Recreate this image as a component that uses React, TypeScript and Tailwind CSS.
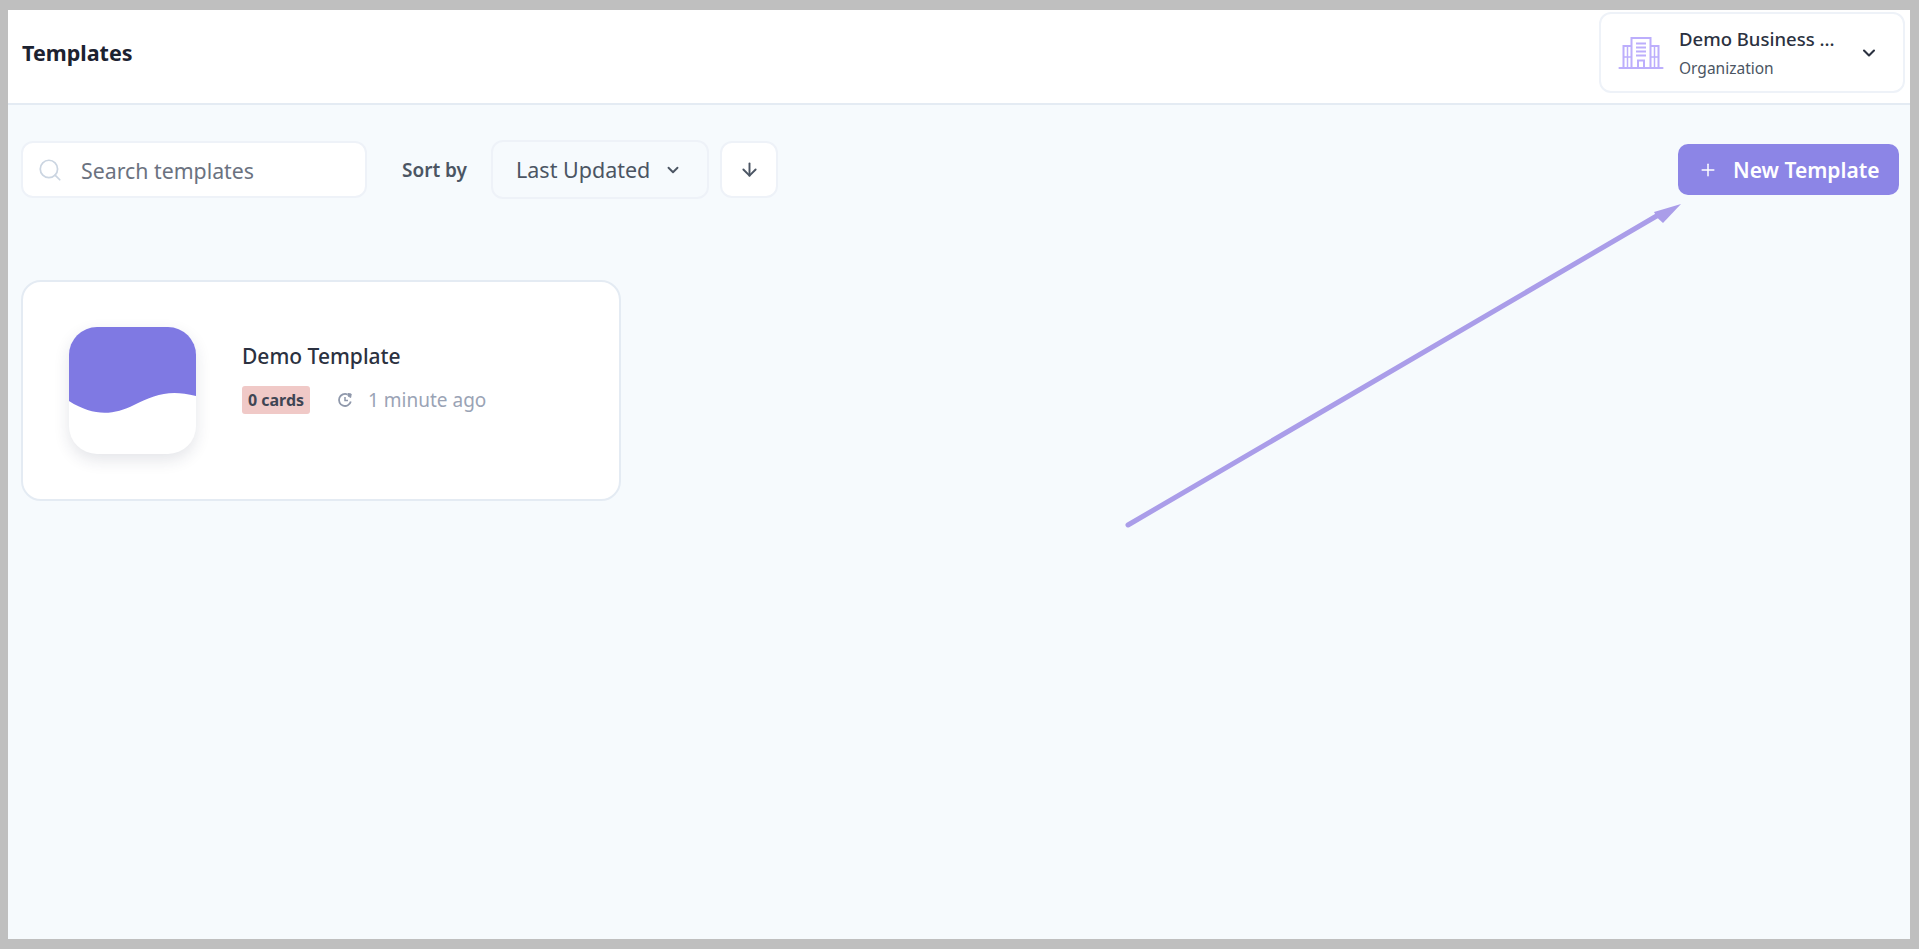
import React from "react";
import { ChevronDown, ArrowDown, Plus, Search } from "lucide-react";

function BuildingIcon() {
  return (
    <svg width="46" height="34" viewBox="0 0 46 34" fill="none" stroke="#bcaefc" strokeWidth="2" className="shrink-0">
      <path d="M1.500 32h43" strokeWidth="2.200" strokeLinecap="round" />
      <path d="M13.500 32V2h19v30" />
      <path d="M13.500 10H5.500v22M32.500 10h8v22" />
      <path d="M18 7.500h10M18 11.500h10M18 15.500h10M18 19.500h10" strokeWidth="1.800" />
      <path d="M20 32v-7.500h6V32" />
      <path d="M9.500 10v22M36.500 10v22M5.500 21h8M32.500 21h8" strokeWidth="1.500" />
    </svg>
  );
}

function HistoryIcon() {
  return (
    <svg width="16" height="16" viewBox="0 0 16 16" fill="none" stroke="#8f98ab" strokeWidth="1.800" className="ml-[27px] shrink-0">
      <path d="M13.800 9.500A6 6 0 1 1 10.500 2.500" />
      <path d="M11 1.500l3.200 0.500-0.500 3.500-2.700-1.500z" fill="#8f98ab" strokeWidth="1" />
      <path d="M8 5v3.500h3" strokeWidth="1.500" />
    </svg>
  );
}

function Header() {
  return (
    <header className="h-[95px] shrink-0 bg-white border-b-2 border-[#e4ebf3] flex items-start justify-between pl-[14px] pr-[5px]">
      <h1 className="mt-[27px] text-[21.500px] leading-[32px] font-bold text-[#1c2230]">Templates</h1>
      <button className="mt-[2px] w-[306px] h-[81px] rounded-[12px] border-2 border-[#eef2f8] bg-white flex items-center pl-[17px] pr-[24px]">
        <BuildingIcon />
        <span className="ml-[15px] flex flex-col items-start flex-1">
          <span className="text-[18.500px] leading-[26px] font-medium text-[#2b3140] whitespace-nowrap">Demo Business ...</span>
          <span className="mt-[4px] text-[15.500px] leading-[24px] text-[#4b5563]">Organization</span>
        </span>
        <ChevronDown size={20} strokeWidth={2.500} className="text-[#2b3140]" />
      </button>
    </header>
  );
}

function Toolbar() {
  return (
    <div className="flex items-center justify-between pl-[13px] pr-[11px] mt-[35px]">
      <div className="flex items-center">
        <label className="w-[346px] h-[57px] rounded-[12px] border-2 border-[#eef2f8] bg-white flex items-center pl-[14px]">
          <Search size={26} strokeWidth={1.600} className="text-[#cbd5e1]" />
          <span className="ml-[18px] pt-[2px] text-[21.300px] text-[#6b7280]">Search templates</span>
        </label>
        <span className="ml-[35px] pt-[2px] text-[19px] font-semibold text-[#4b5563]">Sort by</span>
        <button className="ml-[24px] w-[218px] h-[59px] rounded-[12px] border-2 border-[#eef2f8] flex items-center pl-[23px] text-[21.500px] text-[#4b5563]">
          <span className="pt-[2px]">Last Updated</span>
          <ChevronDown size={18} strokeWidth={2.500} className="ml-[14px] text-[#4b5563]" />
        </button>
        <button className="ml-[11px] w-[58px] h-[57px] rounded-[12px] border-2 border-[#eef2f8] bg-white flex items-center justify-center">
          <ArrowDown size={21} strokeWidth={2.200} className="text-[#4b5563]" />
        </button>
      </div>
      <button className="w-[221px] h-[51px] rounded-[10px] bg-[#8c85e6] flex items-center pl-[20px] text-white text-[21px] font-semibold">
        <Plus size={20} strokeWidth={1.800} />
        <span className="ml-[15px] pt-[2px]">New Template</span>
      </button>
    </div>
  );
}

function TemplateCard() {
  return (
    <div className="ml-[13px] mt-[81px] w-[600px] h-[221px] rounded-[20px] border-2 border-[#e4ebf3] bg-white flex items-start pl-[46px] pt-[45px]">
      <div className="w-[127px] h-[127px] rounded-[28px] bg-white shadow-[0_6px_16px_rgba(30,40,70,0.12)] overflow-hidden shrink-0">
        <svg width="127" height="127" viewBox="0 0 127 127">
          <path d="M0 0H127V69C100 62 85 68 65 78C45 88 25 90 0 74Z" fill="#7f79e3" />
        </svg>
      </div>
      <div className="ml-[46px] pt-[14px]">
        <div className="text-[21px] leading-[30px] font-medium text-[#2b3140]">Demo Template</div>
        <div className="mt-[15px] flex items-center">
          <span className="h-[28px] w-[68px] justify-center rounded-[3px] bg-[#f0c9c7] flex items-center text-[16px] font-bold text-[#3f4554]">0 cards</span>
          <HistoryIcon />
          <span className="ml-[15px] text-[19px] text-[#9aa3b5]">1 minute ago</span>
        </div>
      </div>
    </div>
  );
}

export default function App() {
  return (
    <div className="relative h-[949px] bg-[#bfbfbf] pl-[8px] pr-[9px] pt-[10px] pb-[10px] font-['Noto_Sans',sans-serif]">
      <div className="h-full flex flex-col bg-[#f6fafd]">
        <Header />
        <Toolbar />
        <TemplateCard />
      </div>
      {/* annotation arrow drawn over the page */}
      <svg className="absolute left-0 top-0 pointer-events-none" width="1919" height="949">
        <path d="M1128 525L1660 214" stroke="#aa9de9" strokeWidth="5" strokeLinecap="round" />
        <path d="M1681 204L1654 212L1657.500 218L1663 223Z" fill="#aa9de9" />
      </svg>
    </div>
  );
}
